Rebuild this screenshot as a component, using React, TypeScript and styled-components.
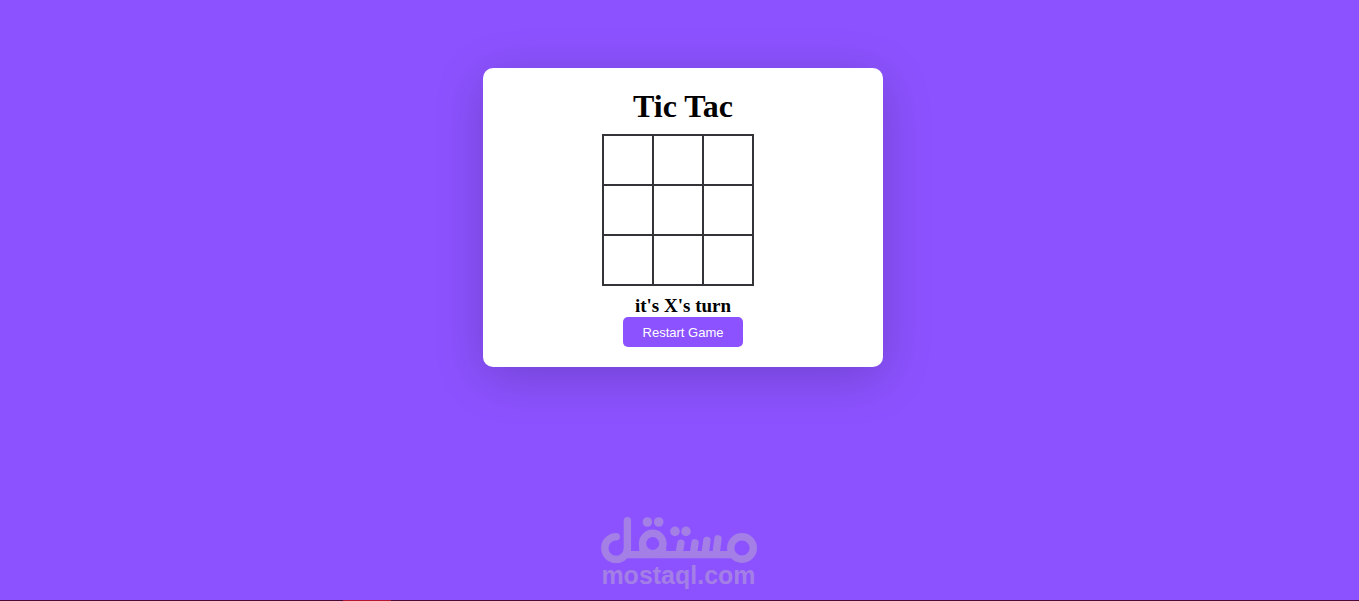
import { useState } from "react";
import styled, { createGlobalStyle } from "styled-components";

const purple = "#8c52ff";

const GlobalStyle = createGlobalStyle`
  *, *::before, *::after { box-sizing: border-box; }
  body {
    margin: 0;
    background: ${purple};
    font-family: "Liberation Serif", "Times New Roman", serif;
    color: #000;
  }
`;

const Page = styled.div`
  min-height: 100vh;
  display: flex;
  flex-direction: column;
`;

const Main = styled.main`
  flex: 1;
  display: flex;
  justify-content: center;
  align-items: flex-start;
  padding: 68px 0 40px 7px;
`;

const Card = styled.section`
  width: 400px;
  max-width: 100%;
  padding: 20px;
  display: flex;
  flex-direction: column;
  align-items: center;
  background: #fff;
  border-radius: 10px;
  box-shadow: 0 10px 50px rgba(0, 0, 0, 0.19);
`;

const Title = styled.h1`
  margin: 0 0 10px;
  font-size: 32px;
  line-height: 36px;
`;

const Board = styled.div`
  display: grid;
  grid-template-columns: repeat(3, 48px);
  grid-auto-rows: 48px;
  gap: 2px;
  padding: 2px;
  margin-right: 10px;
  background: #333338;
`;

const Cell = styled.button`
  padding: 0;
  border: 0;
  background: #fff;
  font: bold 28px "Liberation Serif", serif;
  cursor: pointer;
`;

const Status = styled.h2`
  margin: 10px 0 2px;
  font-size: 19px;
  line-height: 19px;
`;

const Restart = styled.button`
  width: 120px;
  height: 30px;
  padding: 0;
  border: 0;
  border-radius: 5px;
  background: ${purple};
  color: #fff;
  font: 13px "Liberation Sans", Arial, sans-serif;
  cursor: pointer;
`;

const Footer = styled.footer`
  display: flex;
  flex-direction: column;
  align-items: center;
  padding: 0 2px 15px 0;
  color: #a37fe6;
`;

const Logo = styled.svg`
  display: block;
  width: 158px;
  height: 50px;
`;

const Domain = styled.span`
  font: bold 25px/20px "Liberation Sans", Arial, sans-serif;
`;

const Track = styled.div`
  display: flex;
  height: 1px;
  padding-left: 343px;
  background: #4a0a35;
`;

const Progress = styled.div`
  width: 48px;
  background: #b5172c;
`;

const lines = [
  [0, 1, 2], [3, 4, 5], [6, 7, 8],
  [0, 3, 6], [1, 4, 7], [2, 5, 8],
  [0, 4, 8], [2, 4, 6],
];

export default function App() {
  const [cells, setCells] = useState<string[]>(Array(9).fill(""));
  const player = cells.filter(Boolean).length % 2 === 0 ? "X" : "O";
  const line = lines.find(([a, b, c]) => cells[a] && cells[a] === cells[b] && cells[a] === cells[c]);
  const full = cells.every(Boolean);
  const status = line ? `${cells[line[0]]} wins` : full ? "Draw" : `it's ${player}'s turn`;

  const play = (index: number) => {
    if (cells[index] || line) return;
    setCells(cells.map((value, i) => (i === index ? player : value)));
  };

  return (
    <Page>
      <GlobalStyle />
      <Main>
        <Card>
          <Title>Tic Tac</Title>
          <Board>
            {cells.map((value, i) => (
              <Cell key={i} type="button" aria-label={`Cell ${i + 1}`} onClick={() => play(i)}>
                {value}
              </Cell>
            ))}
          </Board>
          <Status>{status}</Status>
          <Restart type="button" onClick={() => setCells(Array(9).fill(""))}>
            Restart Game
          </Restart>
        </Card>
      </Main>
      <Footer>
        <Logo viewBox="600 515 158 50" role="img" aria-label="مستقل">
          <g fill="none" stroke="currentColor" strokeWidth="7.4" strokeLinecap="round" strokeLinejoin="round">
            <path d="M616.3 536.8A11.3 11.3 0 1 0 627.4 548V520.6" />
            <path d="M627 554.6H733" strokeLinecap="butt" />
            <circle cx="742" cy="548" r="11.3" />
            <circle cx="652.7" cy="543.5" r="10.2" />
            <path d="M642.5 543.5V553M662.9 543.5V553" strokeWidth="6.6" />
            <path d="M680.9 543.2L679 554M695 542.8L693.4 554M706.9 540.5L705 554M718 538.8L716 554" />
          </g>
          <g fill="currentColor">
            <circle cx="647.4" cy="522" r="4.8" />
            <circle cx="658.7" cy="522" r="4.8" />
            <circle cx="675" cy="531.4" r="4.8" />
            <circle cx="686" cy="531.4" r="4.8" />
          </g>
        </Logo>
        <Domain>mostaql.com</Domain>
      </Footer>
      <Track>
        <Progress />
      </Track>
    </Page>
  );
}
